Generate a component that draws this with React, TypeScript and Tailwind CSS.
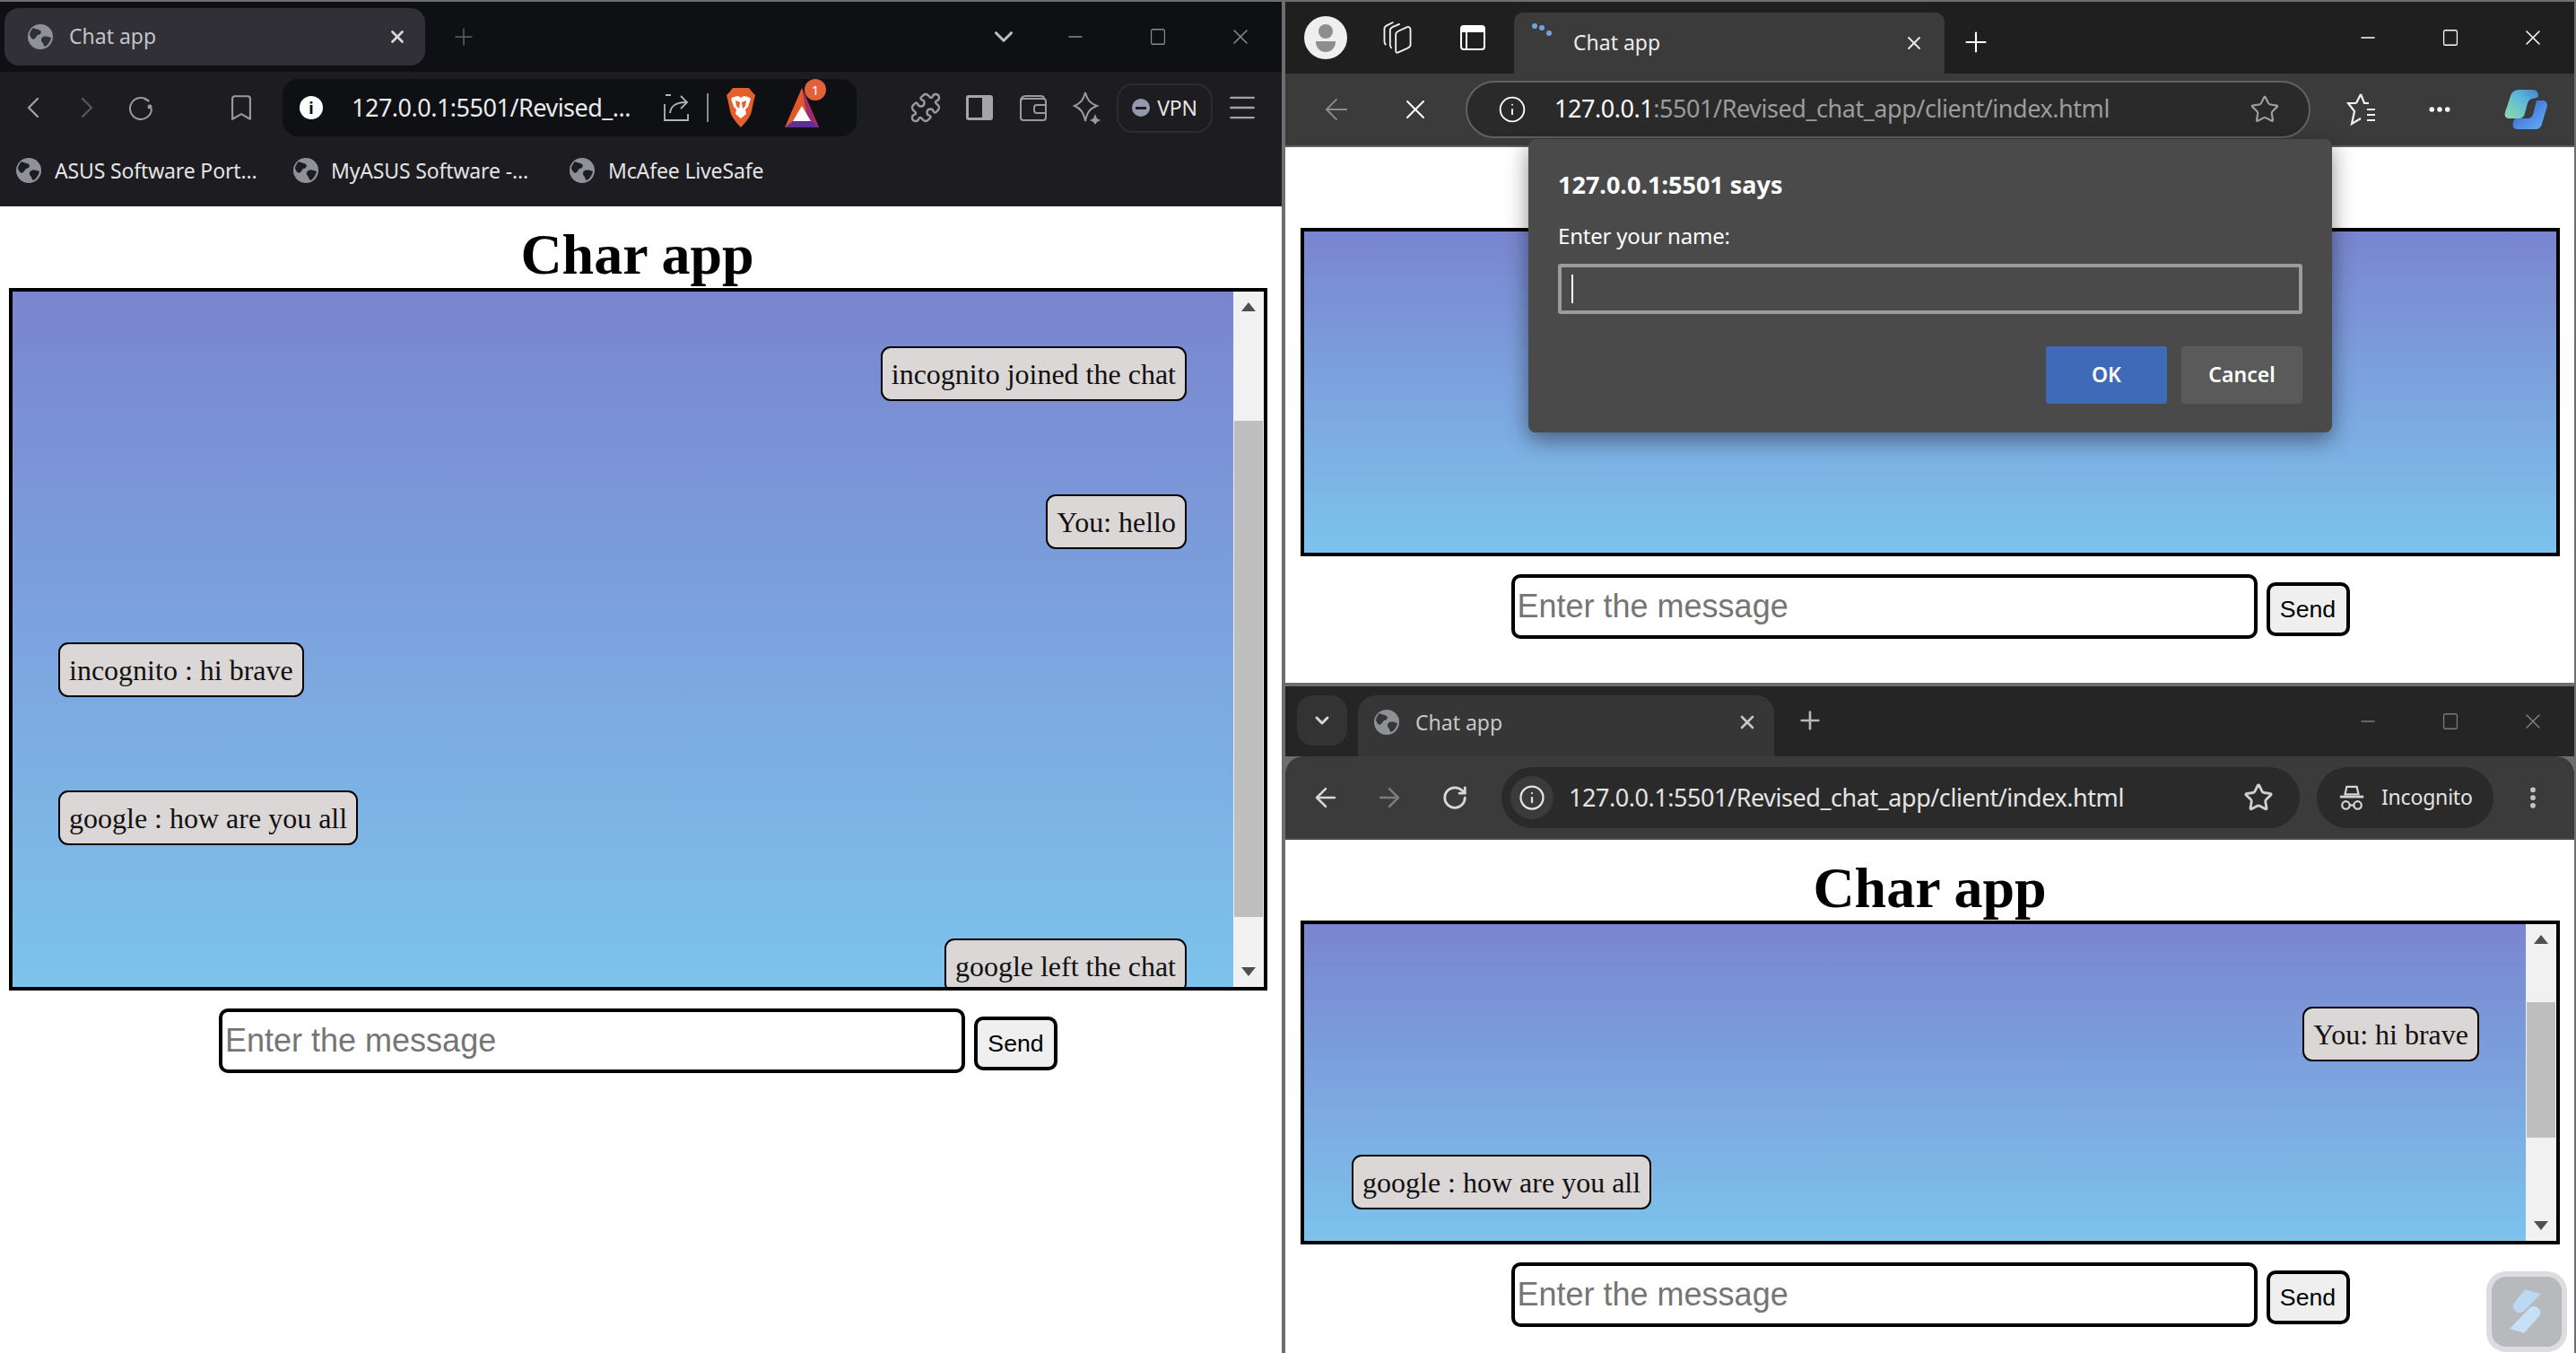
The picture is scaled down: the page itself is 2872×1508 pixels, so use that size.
import React from 'react';
import {
  ArrowLeft, ArrowRight, Bookmark, ChevronDown, ChevronLeft, ChevronRight, EllipsisVertical, Info, Menu, Minus,
  MoreHorizontal, Plus, Puzzle, RotateCw, Square, Star, X
} from 'lucide-react';

const uiFont = 'font-["Noto_Sans",sans-serif]';

function Globe({ className = 'w-7 h-7', fill = '#8e9198', land = '#1c1c21' }: { className?: string; fill?: string; land?: string }) {
  return (
    <svg viewBox="0 0 28 28" className={`${className} shrink-0`}>
      <circle cx="14" cy="14" r="14" fill={fill} />
      <path d="M6 4c3 2 5 1 8 3 2 2 0 5-3 5-2 2-2 4-5 5-2-1-3-3-4-5 0-3 2-6 4-8z" fill={land} />
      <path d="M17 14c3-1 6 0 9 1-1 4-3 8-7 10-2-1-1-3-3-5-2-2-1-5 1-6z" fill={land} />
    </svg>
  );
}

function WindowControls({ color }: { color: string }) {
  return (
    <div className={`flex items-center ${color}`}>
      <div className="w-[92px] flex justify-center"><Minus size={24} strokeWidth={1.5} /></div>
      <div className="w-[92px] flex justify-center"><Square size={22} strokeWidth={1.5} className="scale-x-90" /></div>
      <div className="w-[92px] flex justify-center"><X size={28} strokeWidth={1.3} /></div>
    </div>
  );
}

function ReloadDot() {
  return (
    <svg viewBox="0 0 32 32" className="w-8 h-8" fill="none" stroke="#9a9a9e" strokeWidth="2">
      <path d="M25 9a12 12 0 1 0 3 8" />
      <path d="M20 6c2 1 4 2 5 3" />
      <circle cx="26" cy="15" r="2.5" fill="#9a9a9e" stroke="none" />
    </svg>
  );
}

function BraveLion() {
  return (
    <svg viewBox="0 0 34 46" className="w-[34px] h-[46px]">
      <path d="M8 1h18l4 5 3 3-2 8-2 10c-1 6-8 14-12 18-4-4-11-12-12-18L3 17 1 9l3-3z" fill="#e45f2b" />
      <path d="M9 11l5-1 3 2 3-2 5 1 3 2-3 9-3 3 1 5-6 5-6-5 1-5-3-3-3-9z" fill="#fff" />
      <path d="M11 15l5 2-1 7-3-3zM23 15l-5 2 1 7 3-3z" fill="#e45f2b" />
    </svg>
  );
}

function BatIcon() {
  return (
    <div className="relative w-[38px] h-[44px]">
      <svg viewBox="0 0 38 44" className="w-full h-full">
        <path d="M19 0L0 44h38z" fill="#e0592a" />
        <path d="M19 0l19 44H27z" fill="#9b2d6f" />
        <path d="M0 44h38L29 37H9z" fill="#5d2f92" />
        <path d="M19 20l-10 17h20z" fill="#fff" />
      </svg>
      <div className="absolute -top-[10px] left-[22px] w-[24px] h-[24px] rounded-full bg-[#e2603a] text-white text-[15px] flex items-center justify-center">1</div>
    </div>
  );
}

function Copilot() {
  return (
    <svg viewBox="0 0 48 44" className="w-12 h-11">
      <defs>
        <linearGradient id="cpA" x1="0" y1="1" x2="1" y2="0">
          <stop offset="0" stopColor="#8fdca6" />
          <stop offset="0.6" stopColor="#5db6dc" />
          <stop offset="1" stopColor="#3f86c9" />
        </linearGradient>
        <linearGradient id="cpB" x1="0" y1="0" x2="1" y2="1">
          <stop offset="0" stopColor="#3a55d0" />
          <stop offset="1" stopColor="#62b6f5" />
        </linearGradient>
      </defs>
      <path d="M15 44c-5 0-6-3-5-8l2-4h14c5 0 6-4 7-8l3-12h7c4 0 5 3 5 6l-6 20c-1 4-4 6-8 6z" fill="url(#cpB)" />
      <path d="M6 32C1 32 0 29 1 25L7 7c1-4 5-7 9-7h16c5 0 6 4 6 8l-6 2c-3 0-5 2-6 5l-3 11c-1 4-3 6-7 6z" fill="url(#cpA)" />
    </svg>
  );
}

function IncognitoIcon() {
  return (
    <svg viewBox="0 0 32 32" className="w-[30px] h-[30px]" fill="none" stroke="#d4d4d4" strokeWidth="2.4">
      <path d="M10 3h12l2 9H8z" />
      <path d="M2 15h28" strokeWidth="3" />
      <circle cx="9" cy="25" r="4.5" />
      <circle cx="23" cy="25" r="4.5" />
      <path d="M13 25h6" />
    </svg>
  );
}

function Collections() {
  return (
    <svg viewBox="0 0 34 44" className="w-[32px] h-[40px]" fill="none" stroke="#f2f2f2" strokeWidth="2">
      <path d="M12 3L4 7c-2 1-3 2-3 4v16c0 2 1 3 2 4" />
      <path d="M20 5l-9 4c-2 1-3 2-3 4v18c0 2 1 3 2 4" />
      <path d="M29 9l-11 5c-2 1-3 2-3 4v20c0 2 1 3 3 2l11-5c2-1 4-2 4-4V12c0-2-2-4-4-3z" />
    </svg>
  );
}

function VerticalTabs() {
  return (
    <div className="w-[28px] h-[28px] rounded-[4px] border-2 border-white border-t-[8px] flex">
      <div className="w-[6px] border-r-2 border-white" />
    </div>
  );
}

function Arrow({ down }: { down?: boolean }) {
  return (
    <div className="h-[34px] flex items-center justify-center shrink-0">
      <svg viewBox="0 0 16 10" className="w-4 h-[10px]">
        <path d={down ? 'M0 0h16L8 10z' : 'M0 10h16L8 0z'} fill="#505050" />
      </svg>
    </div>
  );
}

function Scrollbar({ thumb }: { thumb: string }) {
  return (
    <div className="w-[34px] shrink-0 bg-[#f1f1f1] flex flex-col">
      <Arrow />
      <div className="flex-1 px-[1px]">
        <div className={`bg-[#bebebe] ${thumb}`} />
      </div>
      <Arrow down />
    </div>
  );
}

function Bubble({ children, side }: { children: React.ReactNode; side: 'left' | 'right' }) {
  return (
    <div className={`shrink-0 h-[61px] border-2 border-black rounded-[11px] bg-[#dbd7d6] px-[10px] pt-[11px] pb-[10px] text-[32px] leading-[36px] whitespace-nowrap text-[#111] ${side === 'right' ? 'self-end' : 'self-start'}`}>
      {children}
    </div>
  );
}

function ChatPage({ boxClass, listClass, formClass, sendClass, headClass, messages, thumb }: {
  boxClass: string; listClass?: string; formClass: string; sendClass: string; headClass: string;
  messages: { text: string; side: 'left' | 'right' }[]; thumb?: string;
}) {
  return (
    <div className='flex-1 bg-white flex flex-col font-["Liberation_Serif",serif] overflow-hidden'>
      <h1 className={`text-[64px] font-bold leading-none text-black text-center shrink-0 ${headClass}`}>Char app</h1>
      <div className={`border-4 border-black flex shrink-0 bg-linear-to-b from-[#7985cf] to-[#7cc3ed] ${boxClass}`}>
        <div className={`flex-1 flex flex-col gap-[104px] overflow-hidden ${listClass ?? ''}`}>
          {messages.map((m) => <Bubble key={m.text} side={m.side}>{m.text}</Bubble>)}
        </div>
        {thumb && <Scrollbar thumb={thumb} />}
      </div>
      <div className={`flex justify-center items-end gap-[10px] font-["Liberation_Sans",sans-serif] ${formClass}`}>
        <input
          placeholder="Enter the message"
          className="w-[832px] h-[72px] border-4 border-black rounded-[10px] pl-[3px] text-[36px] bg-white text-black placeholder:text-[#757575] outline-none"
        />
        <button className={`w-[93px] h-[60px] border-4 border-black rounded-[10px] bg-[#efefef] text-[26.67px] text-black ${sendClass}`}>Send</button>
      </div>
    </div>
  );
}

function BraveWindow() {
  return (
    <div className="w-[1429px] flex flex-col shrink-0">
      <div className={`h-[78px] bg-[#0f1014] flex items-center ${uiFont}`}>
        <div className="ml-[5px] w-[469px] h-[64px] rounded-[16px] bg-[#303036] flex items-center pl-[26px] pr-[20px]">
          <Globe land="#303036" />
          <span className="ml-[18px] text-[23px] text-[#c4c4c8] flex-1 pb-[2px]">Chat app</span>
          <X size={22} strokeWidth={3} className="text-[#d8d8d8]" />
        </div>
        <Plus size={30} strokeWidth={1.4} className="ml-[28px] text-[#55565b]" />
        <ChevronDown size={34} strokeWidth={2.2} className="ml-auto mr-[17px] text-[#bdbdbd]" />
        <WindowControls color="text-[#8a8a8a]" />
      </div>
      <div className={`h-[150px] bg-[#1c1c21] flex flex-col ${uiFont}`}>
        <div className="h-[80px] flex items-center">
          <div className="ml-[7px] w-[60px] flex justify-center"><ChevronLeft size={40} strokeWidth={1.4} className="text-[#a2a2a6]" /></div>
          <div className="w-[60px] flex justify-center"><ChevronRight size={40} strokeWidth={1.4} className="text-[#55565b]" /></div>
          <div className="w-[60px] flex justify-center"><ReloadDot /></div>
          <div className="ml-[52px] w-[60px] flex justify-center"><Bookmark size={34} strokeWidth={1.5} className="text-[#9a9a9e]" /></div>
          <div className="ml-[16px] w-[640px] h-[64px] rounded-[18px] bg-[#0f1014] flex items-center pl-[19px]">
            <div className="w-[26px] h-[26px] rounded-full bg-white text-black text-[18px] font-bold flex items-center justify-center">i</div>
            <span className="ml-[32px] text-[27px] tracking-[-0.5px] text-[#ececec] flex-1 whitespace-nowrap">127.0.0.1:5501/Revised_...</span>
            <svg viewBox="0 0 30 32" className="w-[30px] h-[32px]" fill="none" stroke="#b4b4b8" strokeWidth="1.8">
              <path d="M9 2H3v0M2 12v18h26v-7M8 22c1-8 6-12 18-12M20 3l7 7-7 7" />
            </svg>
            <div className="ml-[19px] w-[2px] h-[32px] bg-[#8a8a8a]" />
            <div className="ml-[19px]"><BraveLion /></div>
            <div className="ml-[32px] mr-[42px]"><BatIcon /></div>
          </div>
          <div className="ml-[47px] w-[60px] flex justify-center"><Puzzle size={36} strokeWidth={1.6} className="text-[#9a9a9e]" /></div>
          <div className="w-[60px] flex justify-center">
            <div className="w-[30px] h-[28px] rounded-[3px] border-[3px] border-[#a5a5a9] flex justify-end"><div className="w-[9px] bg-[#a5a5a9]" /></div>
          </div>
          <div className="w-[60px] flex justify-center">
            <svg viewBox="0 0 32 30" className="w-[32px] h-[30px]" fill="none" stroke="#9a9a9e" strokeWidth="2">
              <rect x="2" y="5" width="28" height="24" rx="3" />
              <path d="M2 8c0-4 2-6 6-6h16c3 0 4 1 4 3" />
              <path d="M30 12H20a3 3 0 0 0-3 3v3a3 3 0 0 0 3 3h10" />
            </svg>
          </div>
          <div className="w-[60px] flex justify-center">
            <svg viewBox="0 0 32 38" className="w-[32px] h-[38px]" fill="none" stroke="#9a9a9e" strokeWidth="2">
              <path d="M14 2c2 8 5 12 13 15-8 3-11 7-13 17-2-10-5-14-12-17 7-3 10-7 12-15z" />
              <path d="M25 26l2 5 4 2-4 2-2 3-2-3-4-2 4-2z" fill="#9a9a9e" stroke="none" />
            </svg>
          </div>
          <div className="ml-[3px] w-[107px] h-[55px] rounded-[18px] border-2 border-[#2c2c32] flex items-center justify-center gap-[8px]">
            <div className="w-[20px] h-[20px] rounded-full bg-[#9599ad] flex items-center justify-center"><div className="w-[12px] h-[3px] bg-[#1c1c21]" /></div>
            <span className="text-[23px] tracking-[-0.3px] text-[#e4e4e4]">VPN</span>
          </div>
          <div className="w-[66px] flex justify-center"><Menu size={38} strokeWidth={1.5} className="text-[#a2a2a6]" /></div>
        </div>
        <div className="h-[60px] flex items-center pl-[18px] text-[23px] tracking-[-0.15px] text-[#e4e4e4] whitespace-nowrap">
          <div className="w-[309px] flex items-center gap-[15px]"><Globe />ASUS Software Port...</div>
          <div className="w-[308px] flex items-center gap-[14px]"><Globe />MyASUS Software -...</div>
          <div className="flex items-center gap-[15px]"><Globe />McAfee LiveSafe</div>
        </div>
      </div>
      <ChatPage
        headClass="h-[91px] pt-[22px] pr-[8px]"
        boxClass="ml-[10px] w-[1403px] h-[783px]"
        listClass="pl-[51px] pr-[52px] pt-[61px]"
        formClass="mt-[20px] w-[1423px]"
        sendClass="mb-[3px]"
        thumb="mt-[110px] h-[553px]"
        messages={[
          { text: 'incognito joined the chat', side: 'right' },
          { text: 'You: hello', side: 'right' },
          { text: 'incognito : hi brave', side: 'left' },
          { text: 'google : how are you all', side: 'left' },
          { text: 'google left the chat', side: 'right' },
        ]}
      />
    </div>
  );
}

function EdgeWindow() {
  return (
    <div className="h-[759px] flex flex-col shrink-0">
      <div className={`h-[80px] bg-[#1f1f1f] flex items-center ${uiFont}`}>
        <div className="ml-[21px] w-[48px] h-[48px] rounded-full bg-[#efefef] flex flex-col items-center justify-center gap-[3px]">
          <div className="w-[16px] h-[16px] rounded-full bg-[#8e8e8e]" />
          <div className="w-[22px] h-[12px] rounded-b-full bg-[#8e8e8e]" />
        </div>
        <div className="ml-[36px] w-[40px] flex justify-center"><Collections /></div>
        <div className="ml-[44px] w-[40px] flex justify-center"><VerticalTabs /></div>
        <div className="ml-[26px] w-[480px] h-[68px] self-end rounded-t-[10px] bg-[#3b3b3b] flex items-center relative pl-[66px] pr-[22px]">
          <div className="absolute left-[20px] top-[12px] flex gap-[2px]">
            <span className="w-[6px] h-[6px] rounded-full bg-[#6ea5dc]" />
            <span className="w-[6px] h-[6px] rounded-full bg-[#6ea5dc] mt-[2px]" />
            <span className="w-[6px] h-[6px] rounded-full bg-[#6ea5dc] mt-[8px]" />
          </div>
          <span className="text-[23px] text-[#ececec] flex-1 pb-[2px]">Chat app</span>
          <X size={24} strokeWidth={1.8} className="text-[#ececec]" />
        </div>
        <Plus size={36} strokeWidth={1.4} className="ml-[17px] mt-[10px] text-white" />
        <div className="ml-auto"><WindowControls color="text-white" /></div>
      </div>
      <div className={`h-[80px] bg-[#3b3b3b] flex items-center ${uiFont}`}>
        <div className="ml-[27px] w-[60px] flex justify-center"><ArrowLeft size={38} strokeWidth={1.2} className="text-[#8b8b8b]" /></div>
        <div className="ml-[28px] w-[60px] flex justify-center"><X size={36} strokeWidth={1.3} className="text-white" /></div>
        <div className="ml-[26px] w-[942px] h-[64px] rounded-full border-2 border-[#626262] bg-[#2a2a2a] flex items-center pl-[34px]">
          <Info size={32} strokeWidth={1.4} className="text-white" />
          <span className="ml-[31px] text-[27px] tracking-[-0.45px] text-white whitespace-nowrap flex-1 pb-[2px]">127.0.0.1<span className="text-[#9c9c9c]">:5501/Revised_chat_app/client/index.html</span></span>
          <Star size={34} strokeWidth={1.5} className="mr-[32px] text-[#a0a0a0]" />
        </div>
        <div className="ml-[37px] w-[40px] flex justify-center">
          <svg viewBox="0 0 34 38" className="w-[34px] h-[38px]" fill="none" stroke="#f2f2f2" strokeWidth="2.2">
            <path d="M16 2l4 10h5M23 19h9M23 25h9M23 31h9M11 12H2l7 9-3 14 10-6" />
            <path d="M16 2l-5 10" />
          </svg>
        </div>
        <div className="ml-[47px] w-[40px] flex justify-center"><MoreHorizontal size={30} strokeWidth={2.4} className="text-white" /></div>
        <div className="ml-[52px]"><Copilot /></div>
      </div>
      <div className="h-[2px] bg-[#5e5e5e]" />
      <ChatPage
        headClass="h-[90px] pt-[20px]"
        boxClass="ml-[17px] w-[1404px] h-[366px]"
        formClass="mt-[20px] w-[1438px]"
        sendClass="mb-[3px]"
        messages={[]}
      />
    </div>
  );
}

function ChromeWindow() {
  return (
    <div className="flex-1 flex flex-col min-h-0">
      <div className={`h-[78px] bg-[#252525] flex ${uiFont}`}>
        <div className="ml-[13px] mt-[10px] w-[56px] h-[56px] rounded-[18px] bg-[#333333] flex items-center justify-center">
          <ChevronDown size={24} strokeWidth={3} className="text-[#d8d8d8]" />
        </div>
        <div className="ml-[12px] w-[464px] h-[68px] self-end rounded-t-[20px] bg-[#363636] flex items-center pl-[18px] pr-[18px] pb-[8px]">
          <Globe land="#363636" />
          <span className="ml-[18px] text-[23px] text-[#c8c8c8] flex-1">Chat app</span>
          <X size={24} strokeWidth={2.6} className="text-[#c8c8c8]" />
        </div>
        <Plus size={32} strokeWidth={2} className="ml-[24px] mt-[22px] text-[#b8b8b8]" />
        <div className="ml-auto h-[78px] flex items-center"><WindowControls color="text-[#7c7c7c]" /></div>
      </div>
      <div className={`h-[93px] bg-[#3b3b3b] border-b-2 border-[#4a4a4a] rounded-t-[20px] flex items-center ${uiFont}`}>
        <div className="ml-[15px] w-[60px] flex justify-center"><ArrowLeft size={34} strokeWidth={1.8} className="text-[#d8d8d8]" /></div>
        <div className="ml-[11px] w-[60px] flex justify-center"><ArrowRight size={34} strokeWidth={1.8} className="text-[#7c7c7c]" /></div>
        <div className="ml-[13px] w-[60px] flex justify-center"><RotateCw size={30} strokeWidth={2.2} className="text-[#d8d8d8]" /></div>
        <div className="ml-[22px] w-[890px] h-[68px] rounded-full bg-[#2a2a2a] flex items-center pl-[10px]">
          <div className="w-[48px] h-[48px] rounded-full bg-[#3b3b3b] flex items-center justify-center"><Info size={30} strokeWidth={1.8} className="text-[#e4e4e4]" /></div>
          <span className="ml-[17px] pt-[2px] text-[27px] tracking-[-0.45px] text-[#e4e4e4] whitespace-nowrap flex-1">127.0.0.1:5501/Revised_chat_app/client/index.html</span>
          <Star size={34} strokeWidth={2} className="mr-[29px] text-[#d0d0d0]" />
        </div>
        <div className="ml-[19px] w-[197px] h-[68px] rounded-full bg-[#2a2a2a] flex items-center pl-[24px] gap-[18px]">
          <IncognitoIcon />
          <span className="text-[23px] tracking-[-0.2px] text-[#e4e4e4]">Incognito</span>
        </div>
        <div className="ml-[29px] w-[30px] flex justify-center"><EllipsisVertical size={32} strokeWidth={2.6} className="text-[#c8c8c8]" /></div>
      </div>
      <ChatPage
        headClass="h-[90px] pt-[22px]"
        boxClass="ml-[17px] w-[1404px] h-[361px]"
        listClass="pl-[53px] pr-[52px] pt-[92px]"
        formClass="mt-[20px] w-[1438px]"
        sendClass="mb-[3px]"
        thumb="mt-[53px] h-[151px]"
        messages={[
          { text: 'You: hi brave', side: 'right' },
          { text: 'google : how are you all', side: 'left' },
        ]}
      />
    </div>
  );
}

function PromptDialog() {
  return (
    <div className={`absolute left-[1704px] top-[155px] w-[896px] h-[327px] rounded-[8px] bg-[#4a4a4a] shadow-[0_8px_24px_rgba(0,0,0,0.45)] px-[33px] pt-[33px] text-white ${uiFont}`}>
      <div className="text-[27px] font-bold leading-[36px]">127.0.0.1:5501 says</div>
      <div className="mt-[21px] text-[24px] leading-[36px] tracking-[-0.2px]">Enter your name:</div>
      <div className="mt-[13px] h-[56px] border-4 border-[#9a9da0] rounded-[3px] flex items-center pl-[11px]">
        <div className="w-[2px] h-[32px] bg-white" />
      </div>
      <div className="mt-[36px] flex justify-end gap-[16px] text-[23px] font-semibold">
        <button className="w-[135px] h-[64px] rounded-[3px] bg-[#3f6ab8] pb-[2px]">OK</button>
        <button className="w-[135px] h-[64px] rounded-[3px] bg-[#5a5a5a] pb-[2px]">Cancel</button>
      </div>
    </div>
  );
}

function FloatingWidget() {
  return (
    <div className="absolute left-[2772px] top-[1417px] w-[90px] h-[90px] rounded-[22px] bg-[#dcdde1] p-[6px]">
      <div className="w-full h-full rounded-[16px] bg-[#b8b9bc] flex items-center justify-center">
        <svg viewBox="0 0 40 52" className="w-[38px] h-[50px]">
          <path d="M18 0l19 5-20 20c-3 3-7 3-10 0-3-3-4-7-1-10z" fill="#bcd9f4" />
          <path d="M23 22c3-3 8-3 11 0 3 3 3 7 0 10L17 51 0 46z" fill="#c6e0f7" />
        </svg>
      </div>
    </div>
  );
}

export default function App() {
  return (
    <div className="relative w-[2872px] h-[1508px] overflow-hidden bg-[#6e6e6e] flex flex-col">
      <div className="h-[2px] bg-[#6e6e6e] shrink-0" />
      <div className="flex-1 flex min-h-0">
        <BraveWindow />
        <div className="w-[4px] bg-[#6e6e6e] shrink-0" />
        <div className="w-[1437px] flex flex-col shrink-0">
          <EdgeWindow />
          <div className="h-[4px] bg-[#6e6e6e] shrink-0" />
          <ChromeWindow />
        </div>
      </div>
      <PromptDialog />
      <FloatingWidget />
    </div>
  );
}
